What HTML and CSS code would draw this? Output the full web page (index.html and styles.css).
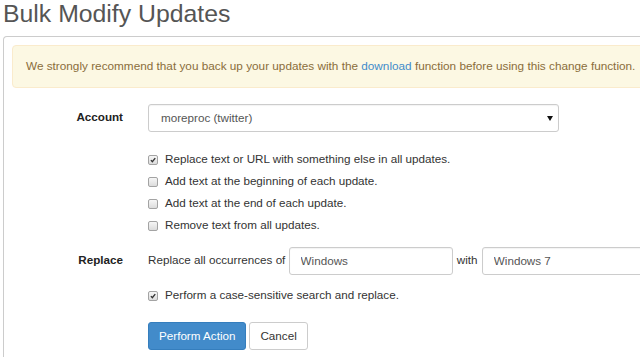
FILE: index.html
```html
<!DOCTYPE html>
<html lang="en">
<head>
    <meta charset="UTF-8">
    <meta name="viewport" content="width=device-width, initial-scale=1.0">
    <title>Bulk Modify Updates</title>
    <link rel="stylesheet" href="styles.css">
</head>
<body>
    <div class="page">
        <h1 class="page-title">Bulk Modify Updates</h1>
        <div class="panel">
            <div class="alert">
                We strongly recommend that you back up your updates with the <a href="#">download</a> function before using this change function.
            </div>

            <form class="bulk-form">
                <div class="form-row">
                    <label class="row-label" for="account">Account</label>
                    <div class="select-wrap">
                        <select id="account" class="field select-field">
                            <option>moreproc (twitter)</option>
                        </select>
                    </div>
                </div>

                <div class="form-row checks">
                    <span class="row-label"></span>
                    <div class="check-list">
                        <label class="check">
                            <span class="box"><svg viewBox="0 0 10 10"><path d="M2.4 5.2 L4.2 7.2 L7.8 2.6"/></svg></span>
                            Replace text or URL with something else in all updates.
                        </label>
                        <label class="check"><span class="box"></span>Add text at the beginning of each update.</label>
                        <label class="check"><span class="box"></span>Add text at the end of each update.</label>
                        <label class="check"><span class="box"></span>Remove text from all updates.</label>
                    </div>
                </div>

                <div class="form-row replace-row">
                    <label class="row-label" for="find">Replace</label>
                    <div class="inline-fields">
                        Replace all occurrences of
                        <input id="find" class="field text-field" type="text" value="Windows">
                        <span class="joiner">with</span>
                        <input class="field text-field" type="text" value="Windows 7">
                    </div>
                </div>

                <div class="form-row case-row">
                    <span class="row-label"></span>
                    <label class="check">
                        <span class="box"><svg viewBox="0 0 10 10"><path d="M2.4 5.2 L4.2 7.2 L7.8 2.6"/></svg></span>
                        Perform a case-sensitive search and replace.
                    </label>
                </div>

                <div class="form-row actions">
                    <span class="row-label"></span>
                    <div class="buttons">
                        <button type="submit" class="btn btn-primary">Perform Action</button>
                        <button type="button" class="btn btn-default">Cancel</button>
                    </div>
                </div>
            </form>
        </div>
    </div>
</body>
</html>
```

FILE: styles.css
```css
html, body {
    overflow: hidden;
}
body {
    margin: 0;
    font-family: "Liberation Sans", Arial, sans-serif;
    font-size: 11.67px;
    line-height: 16.67px;
    color: #333;
    background-color: #fff;
}
.page {
    width: 660px;
    padding: 0 3px;
}
.page-title {
    margin: 0 0 8px 0;
    font-size: 24.8px;
    font-weight: normal;
    line-height: 28px;
    color: #555;
}
.panel {
    border: 1px solid #ccc;
    border-bottom: none;
    border-radius: 4px 4px 0 0;
    padding: 8px 8px 0 8px;
    min-height: 320px;
}
.alert {
    background-color: #fcf8e3;
    border: 1px solid #faebcc;
    border-radius: 4px;
    color: #8a6d3b;
    font-size: 11.78px;
    padding: 12px 13px;
    margin-bottom: 16px;
    white-space: nowrap;
}
.alert a {
    color: #428bca;
    text-decoration: none;
}
.form-row {
    display: grid;
    grid-template-columns: 111px 1fr;
    column-gap: 25px;
    align-items: center;
}
.row-label {
    text-align: right;
    font-weight: bold;
    color: #222;
}
.select-wrap {
    position: relative;
    width: 411px;
}
.select-wrap::after {
    content: "";
    position: absolute;
    right: 6px;
    top: 12px;
    border-left: 3px solid transparent;
    border-right: 3px solid transparent;
    border-top: 5px solid #111;
}
.field {
    box-sizing: border-box;
    height: 28px;
    border: 1px solid #ccc;
    border-radius: 3px;
    font-family: inherit;
    font-size: 11.67px;
    color: #555;
    background-color: #fff;
    box-shadow: inset 0 1px 1px rgba(0, 0, 0, 0.05);
}
.select-field {
    width: 100%;
    padding: 0 12px;
    appearance: none;
    -webkit-appearance: none;
}
.checks {
    margin-top: 17px;
}
.check-list {
    display: flex;
    flex-direction: column;
}
.check {
    display: flex;
    align-items: center;
    height: 22px;
}
.box {
    box-sizing: border-box;
    width: 10px;
    height: 10px;
    margin-right: 7px;
    border: 1px solid #a3a3a3;
    border-radius: 2px;
    background: linear-gradient(#f6f6f6, #dcdcdc);
    flex-shrink: 0;
}
.box svg {
    display: block;
    width: 8px;
    height: 8px;
}
.box path {
    fill: none;
    stroke: #333;
    stroke-width: 1.7;
}
.replace-row {
    margin-top: 10px;
}
.inline-fields {
    white-space: nowrap;
}
.joiner {
    margin: 0 1px;
}
.text-field {
    width: 164px;
    padding: 0 11px;
    vertical-align: middle;
}
.case-row {
    margin-top: 10px;
}
.actions {
    margin-top: 15px;
}
.buttons {
    display: flex;
    gap: 3px;
}
.btn {
    height: 28px;
    padding: 0 10px;
    border: 1px solid transparent;
    border-radius: 3px;
    font-family: inherit;
    font-size: 11.67px;
    cursor: pointer;
}
.btn-primary {
    background-color: #428bca;
    border-color: #357ebd;
    color: #fff;
}
.btn-default {
    background-color: #fff;
    border-color: #ccc;
    color: #333;
}
```
